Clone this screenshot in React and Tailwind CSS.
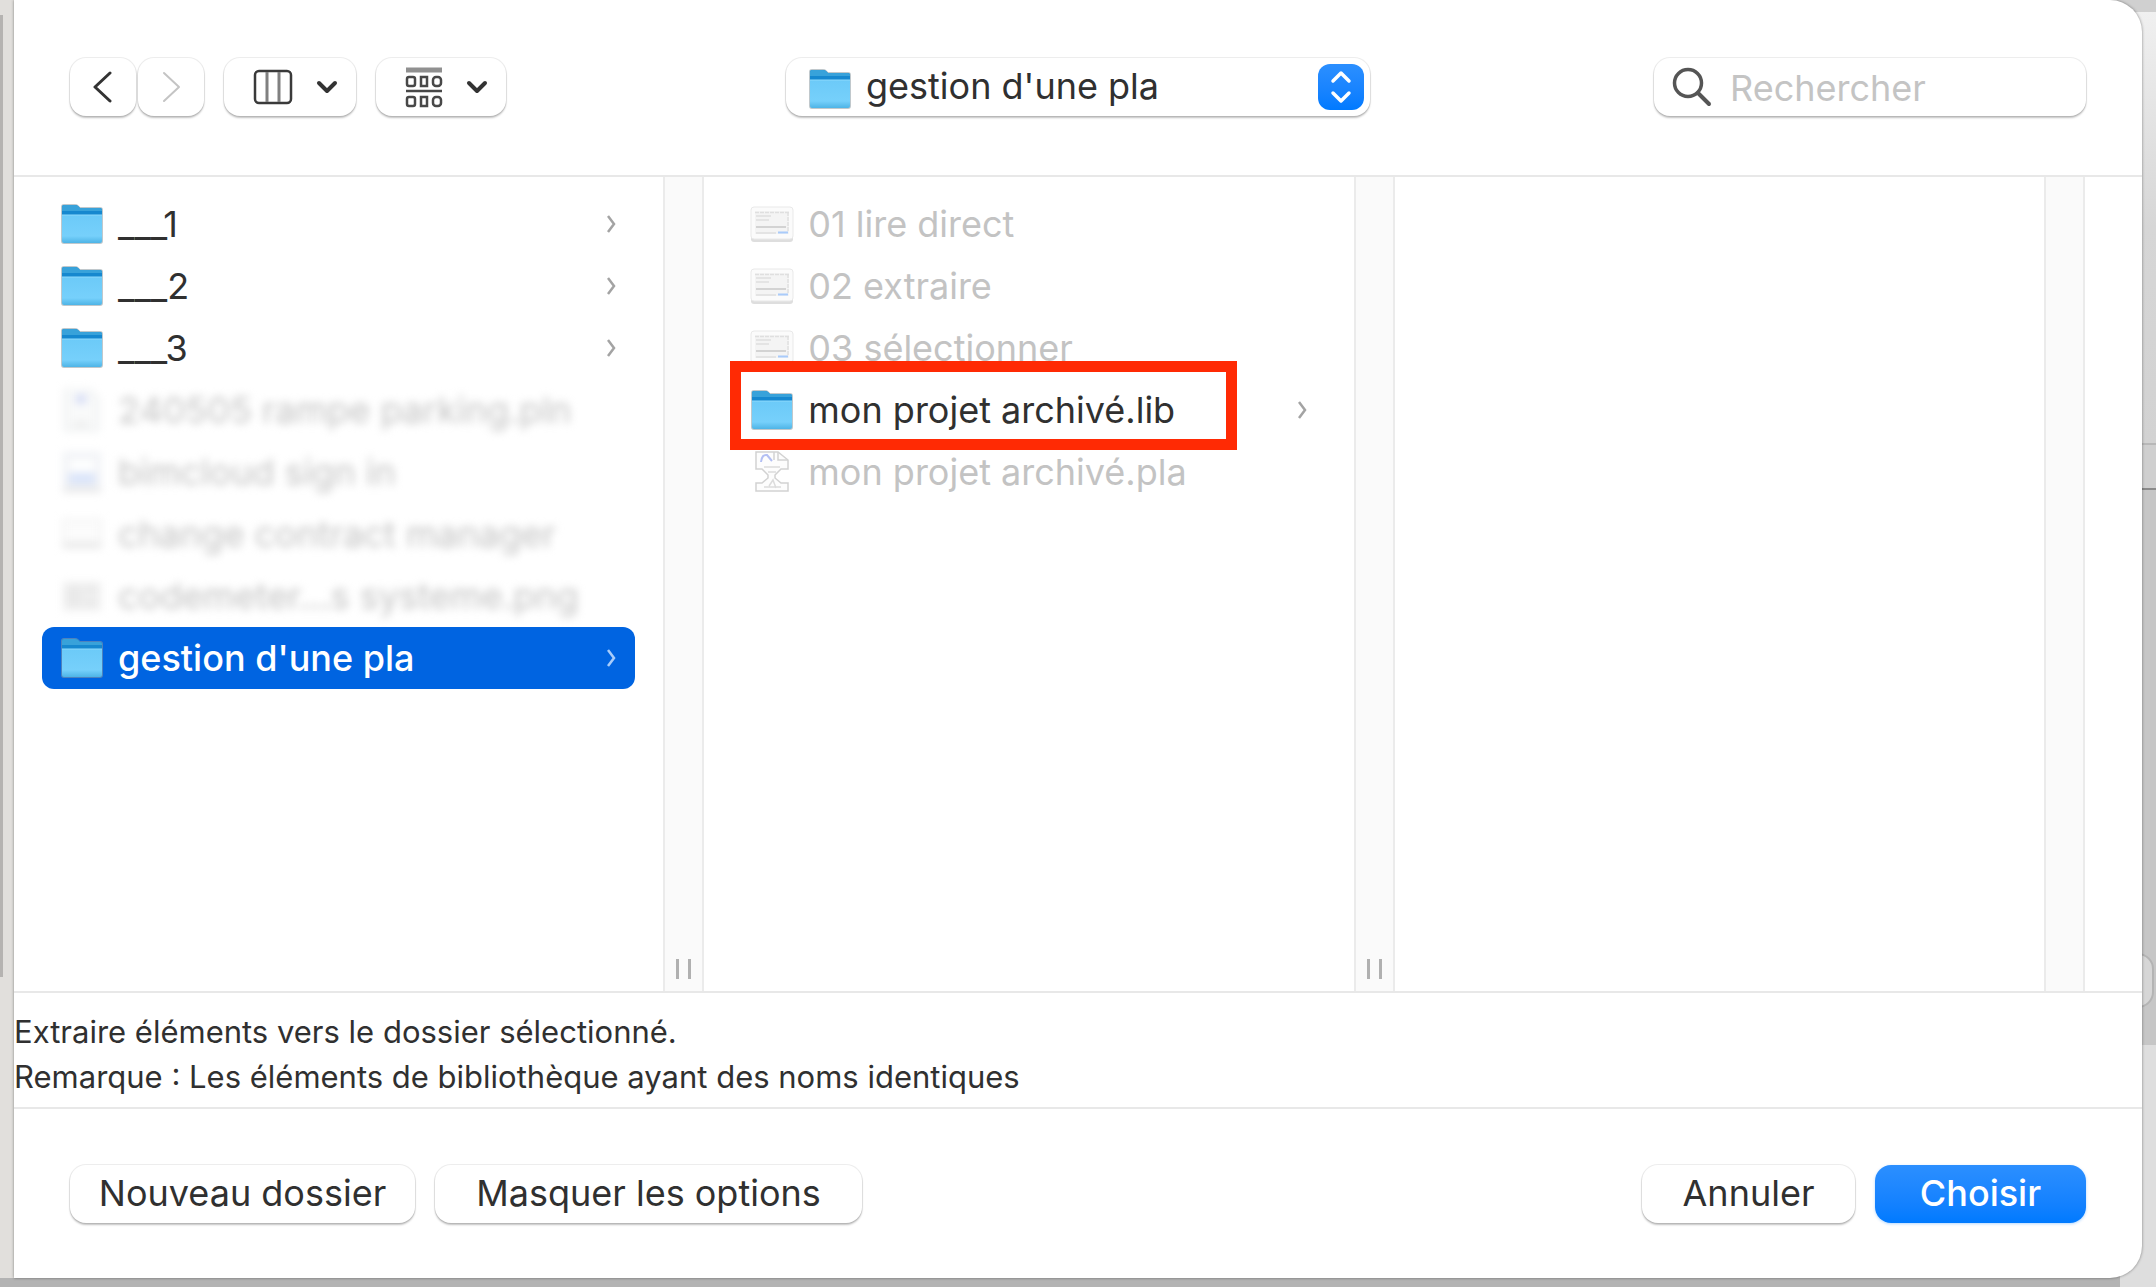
import React from "react";

const firstColumn = [
  { name: "___1", icon: "folder", open: true },
  { name: "___2", icon: "folder", open: true },
  { name: "___3", icon: "folder", open: true },
  { name: "240505 rampe parking.pln", icon: "page", blurred: true },
  { name: "bimcloud sign in", icon: "picture", blurred: true },
  { name: "change contract manager", icon: "window", blurred: true },
  { name: "codemeter...s systeme.png", icon: "grid", blurred: true },
  { name: "gestion d'une pla", icon: "folder", open: true, selected: true },
];

const secondColumn = [
  { name: "01 lire direct", icon: "form", disabled: true },
  { name: "02 extraire", icon: "form", disabled: true },
  { name: "03 sélectionner", icon: "form", disabled: true },
  { name: "mon projet archivé.lib", icon: "folder", open: true, marked: true },
  { name: "mon projet archivé.pla", icon: "archive", disabled: true },
];

const buttonStyle =
  "flex h-[58px] items-center justify-center rounded-2xl bg-white shadow-[0_0_0_1px_rgba(0,0,0,0.07),0_2px_2px_rgba(0,0,0,0.24)]";

const FolderIcon = () => (
  <svg viewBox="0 0 44 42" className="h-[42px] w-11 shrink-0" aria-hidden="true">
    <defs>
      <linearGradient id="folderFront" x1="0" y1="0" x2="0" y2="1">
        <stop offset="0" stopColor="#6ccaf8" />
        <stop offset="0.75" stopColor="#76d0fb" />
        <stop offset="1" stopColor="#4eb4e6" />
      </linearGradient>
    </defs>
    <path d="M1 4q0-3 3-3h11q2 0 3 1l2 2h20q3 0 3 3v31q0 3-3 3H4q-3 0-3-3z" fill="#8c9aa2" opacity="0.55" />
    <path d="M2 4q0-2 2-2h11q2 0 3 1l2 2h20q2 0 2 2v8H2z" fill="#1688cf" />
    <path d="M2 4q0-2 2-2h11q2 0 3 1l2 2h20q2 0 2 2v1H2z" fill="#38a2da" />
    <path d="M2 12h40v26q0 2-2 2H4q-2 0-2-2z" fill="url(#folderFront)" />
    <path d="M2 12h40" stroke="#8edafc" strokeWidth="1" />
  </svg>
);

const FormIcon = () => (
  <svg viewBox="0 0 44 42" className="h-[42px] w-11 shrink-0" aria-hidden="true">
    <rect x="1" y="6" width="42" height="33" rx="3" fill="#dedede" />
    <rect x="1" y="4" width="42" height="32" rx="3" fill="#fbfbfb" stroke="#e9e9e9" />
    <rect x="5" y="8" width="34" height="23" fill="#f4f4f4" />
    <path d="M5 9.5h34M38 9v20" stroke="#dfdfdf" strokeWidth="1.5" strokeDasharray="4 1" />
    <path d="M6 13h15M6 17h13M6 30h20" stroke="#e4e4e4" strokeWidth="2" />
    <path d="M6 24h30" stroke="#d3d3d3" strokeWidth="2" />
    <path d="M28 29.5h10" stroke="#a9cbfa" strokeWidth="2" />
  </svg>
);

const ArchiveIcon = () => (
  <svg viewBox="0 0 44 42" className="h-[42px] w-11 shrink-0" fill="none" stroke="#d2d2d2" strokeWidth="1.5" aria-hidden="true">
    <path d="M6 1h22l10 8v9h-7l-6 6v3l6 5h7v8H6v-8h6l6-5v-3l-6-6H6z" fill="#fdfdfd" />
    <path d="M28 1v8h10M24 1v8" />
    <path d="M11 11q1-8 6-7l5 6" stroke="#b3bff3" strokeWidth="2" />
    <path d="M14 16h16M18 21h8M14 36h17M19 35l4-6 3 8" stroke="#dcdcdc" />
  </svg>
);

const PageIcon = () => (
  <svg viewBox="0 0 44 42" className="h-[42px] w-11 shrink-0" aria-hidden="true">
    <path d="M5 0h23l10 9v32H5z" fill="#f9fafa" stroke="#e6e9ea" strokeWidth="2" />
    <path d="M16 6h10v8H16z" fill="#cfd6f5" />
    <path d="M14 35h14" stroke="#e2e2e2" strokeWidth="3" />
  </svg>
);

const PictureIcon = () => (
  <svg viewBox="0 0 44 42" className="h-[42px] w-11 shrink-0" aria-hidden="true">
    <rect x="3" y="1" width="38" height="40" fill="#f0f2f6" />
    <rect x="9" y="8" width="26" height="12" fill="#ffffff" />
    <rect x="9" y="23" width="26" height="9" fill="#d6e2fb" />
    <rect x="3" y="37" width="38" height="4" fill="#e2e2e2" />
  </svg>
);

const WindowIcon = () => (
  <svg viewBox="0 0 44 42" className="h-[42px] w-11 shrink-0" aria-hidden="true">
    <rect x="3" y="7" width="38" height="27" fill="#fcfcfc" stroke="#eeeeee" strokeWidth="2" />
    <path d="M4 32h36" stroke="#dfdfdf" strokeWidth="4" />
  </svg>
);

const GridIcon = () => (
  <svg viewBox="0 0 44 42" className="h-[42px] w-11 shrink-0" aria-hidden="true">
    <rect x="3" y="7" width="38" height="29" fill="#f0f0f0" />
    <path d="M7 14h14M7 21h14M7 28h14M25 14h12M25 28h12" stroke="#e0e0e0" strokeWidth="3" />
  </svg>
);

const icons = {
  folder: FolderIcon,
  form: FormIcon,
  archive: ArchiveIcon,
  page: PageIcon,
  picture: PictureIcon,
  window: WindowIcon,
  grid: GridIcon,
};

const RowChevron = ({ selected }) => (
  <svg
    viewBox="0 0 10 20"
    className={`ml-auto h-5 w-2.5 shrink-0 ${selected ? "text-[#a9cdfa]" : "text-[#a3a3a3]"}`}
    fill="none"
    stroke="currentColor"
    strokeWidth="2.5"
    aria-hidden="true"
  >
    <path d="M1 2l6 8-6 8" />
  </svg>
);

const DownChevron = () => (
  <svg viewBox="0 0 24 16" className="h-4 w-6" fill="none" stroke="#333333" strokeWidth="4" strokeLinecap="round" strokeLinejoin="round" aria-hidden="true">
    <path d="M4 4l8 8 8-8" />
  </svg>
);

const FileRow = ({ file }) => {
  const Icon = icons[file.icon];

  let color = "text-[#303030]";
  if (file.selected) color = "bg-[#0064e1] font-medium text-white";
  if (file.disabled) color = "text-[#c3c3c3]";
  if (file.blurred) color = "text-[#c3c3c3] blur-[4px]";

  return (
    <li className="relative">
      <button
        type="button"
        disabled={file.disabled || file.blurred}
        className={`flex h-[62px] w-full items-center gap-3.5 rounded-xl pr-[18px] pl-[18px] text-left whitespace-nowrap ${color}`}
      >
        <Icon />
        <span>{file.name}</span>
        {file.open && <RowChevron selected={file.selected} />}
      </button>
      {file.marked && (
        <div className="pointer-events-none absolute -top-[18px] -left-[2px] z-10 h-[89px] w-[507px] border-[11px] border-[#ff2a04]"></div>
      )}
    </li>
  );
};

const Column = ({ files, handle }) => (
  <>
    <ul className="min-w-0 flex-1 px-7 pt-4">
      {files.map((file) => (
        <FileRow key={file.name} file={file} />
      ))}
    </ul>
    <div className="flex w-[41px] items-end justify-center gap-[9px] border-x-2 border-[#ebebeb] bg-[#fafafa] pb-3">
      {handle && (
        <>
          <span className="h-5 w-[3px] bg-[#b0b0b0]"></span>
          <span className="h-5 w-[3px] bg-[#b0b0b0]"></span>
        </>
      )}
    </div>
  </>
);

const Toolbar = () => (
  <header className="grid grid-cols-[1fr_minmax(0,584px)_1fr] items-start border-b-2 border-[#e8e8e8] px-14 pt-[58px] pb-[59px]">
    <div className="flex">
      <button type="button" aria-label="Précédent" className={`${buttonStyle} w-[66px]`}>
        <svg viewBox="0 0 20 34" className="h-[34px] w-5" fill="none" stroke="#333333" strokeWidth="3" strokeLinecap="round" strokeLinejoin="round">
          <path d="M17 3L2 17l15 14" />
        </svg>
      </button>
      <button type="button" aria-label="Suivant" className={`${buttonStyle} ml-0.5 w-[66px]`}>
        <svg viewBox="0 0 20 34" className="h-[34px] w-5" fill="none" stroke="#c4c4c4" strokeWidth="2" strokeLinecap="round" strokeLinejoin="round">
          <path d="M3 3l15 14L3 31" />
        </svg>
      </button>
      <button type="button" aria-label="Présentation par colonnes" className={`${buttonStyle} ml-5 w-[132px] gap-[22px] pl-3`}>
        <svg viewBox="0 0 40 36" className="h-9 w-10" fill="none" stroke="#3a3a3a" strokeWidth="2.5" aria-hidden="true">
          <rect x="2" y="2" width="36" height="32" rx="4" />
          <path d="M14 3v30M26 3v30" stroke="#808080" strokeWidth="3" />
        </svg>
        <DownChevron />
      </button>
      <button type="button" aria-label="Regrouper les éléments" className={`${buttonStyle} ml-5 w-[130px] gap-[22px] pl-3`}>
        <svg viewBox="0 0 38 42" className="h-[42px] w-[38px]" fill="none" stroke="#484848" strokeWidth="2.5" aria-hidden="true">
          <path d="M1 4h36" stroke="#909090" strokeWidth="5" />
          <path d="M1 25h36" strokeWidth="2.5" />
          <rect x="2" y="11" width="8" height="9" rx="2" />
          <rect x="16" y="11" width="6" height="9" />
          <rect x="28" y="11" width="8" height="9" rx="3" />
          <rect x="2" y="31" width="8" height="9" rx="2" />
          <rect x="16" y="31" width="6" height="9" />
          <rect x="28" y="31" width="8" height="9" rx="3" />
        </svg>
        <DownChevron />
      </button>
    </div>

    <div className="relative">
      <span className="pointer-events-none absolute top-2.5 left-[22px]">
        <FolderIcon />
      </span>
      <select
        aria-label="Dossier"
        className={`${buttonStyle} w-full appearance-none pb-0.5 pl-20 text-[#303030] outline-none`}
      >
        <option>gestion d'une pla</option>
      </select>
      <span className="pointer-events-none absolute top-1.5 right-1.5 flex h-[46px] w-[46px] items-center justify-center rounded-xl bg-linear-to-b from-[#2b8fff] to-[#007aff]">
        <svg viewBox="0 0 24 36" className="h-9 w-6" fill="none" stroke="#ffffff" strokeWidth="3.5" strokeLinecap="round" strokeLinejoin="round" aria-hidden="true">
          <path d="M4 12l8-8 8 8M4 24l8 8 8-8" />
        </svg>
      </span>
    </div>

    <label className={`${buttonStyle} w-[432px] max-w-full justify-self-end pl-[18px]`}>
      <svg viewBox="0 0 40 40" className="h-10 w-10 shrink-0" fill="none" stroke="#555555" strokeWidth="3.5" strokeLinecap="round" aria-hidden="true">
        <circle cx="16" cy="16" r="13.5" />
        <path d="M26 26l11 11" strokeWidth="4" />
      </svg>
      <input
        type="search"
        aria-label="Rechercher"
        placeholder="Rechercher"
        className="ml-[18px] w-full min-w-0 bg-transparent pt-0.5 outline-none placeholder:text-[#c4c4c4]"
      />
    </label>
  </header>
);

// parts of the window behind the dialog that stick out at its edges
const Backdrop = () => (
  <div className="absolute inset-0 bg-[#e1dfdc]" aria-hidden="true">
    <div className="absolute top-[15px] left-0 h-[962px] w-[3px] bg-[#b5b3b1]"></div>
    <div className="absolute inset-y-0 right-0 w-20 bg-[#dedede]">
      <div className="h-3 bg-[#d0d0d0]"></div>
      <div className="h-[431px] bg-linear-to-b from-[#f0f0f0] via-[#d6d6d6] to-[#d2d2d2]"></div>
      <div className="h-[45px] border-t-2 border-[#b8b8b8] bg-[#cfcfcf]"></div>
      <div className="h-[557px] border-t-2 border-[#8a8a8a] bg-[#c6c6c6] pt-[463px] pr-0.5">
        <div className="h-[55px] rounded-2xl border-2 border-[#b4b4b4] bg-[#d6d6d6]"></div>
      </div>
    </div>
    <div className="absolute right-9 bottom-0 left-0 h-10 bg-[#b3b3b3]"></div>
    <div className="absolute bottom-[9px] left-0 h-[31px] w-3.5 bg-[#e1dfdc]"></div>
  </div>
);

const App = () => {
  return (
    <div className="relative flex min-h-screen flex-col overflow-hidden px-3.5 pb-[9px] font-['Inter','Liberation_Sans',sans-serif] text-[36px] leading-[44px] text-[#303030]">
      <Backdrop />

      <main className="relative flex flex-1 flex-col rounded-r-[32px] bg-white shadow-[0_0_3px_rgba(0,0,0,0.45)]">
        <Toolbar />

        <section className="flex flex-1">
          <Column files={firstColumn} handle />
          <Column files={secondColumn} handle />
          <Column files={[]} />
          <div className="w-[57px]"></div>
        </section>

        <section className="border-y-2 border-[#e8e8e8] pt-4 pb-2 text-[31px] leading-[45px]">
          <p>Extraire éléments vers le dossier sélectionné.</p>
          <p>Remarque : Les éléments de bibliothèque ayant des noms identiques</p>
        </section>

        <footer className="flex items-center gap-5 px-14 pt-14 pb-[55px]">
          <button type="button" className={`${buttonStyle} w-[345px] pb-0.5`}>
            Nouveau dossier
          </button>
          <button type="button" className={`${buttonStyle} w-[427px] pb-0.5`}>
            Masquer les options
          </button>
          <button type="button" className={`${buttonStyle} ml-auto w-[213px] pb-0.5`}>
            Annuler
          </button>
          <button
            type="button"
            className="flex h-[58px] w-[211px] items-center justify-center rounded-2xl bg-linear-to-b from-[#2b8fff] to-[#007aff] pb-0.5 font-medium text-white shadow-[0_1px_3px_rgba(0,122,255,0.3)]"
          >
            Choisir
          </button>
        </footer>
      </main>
    </div>
  );
};

export default App;
